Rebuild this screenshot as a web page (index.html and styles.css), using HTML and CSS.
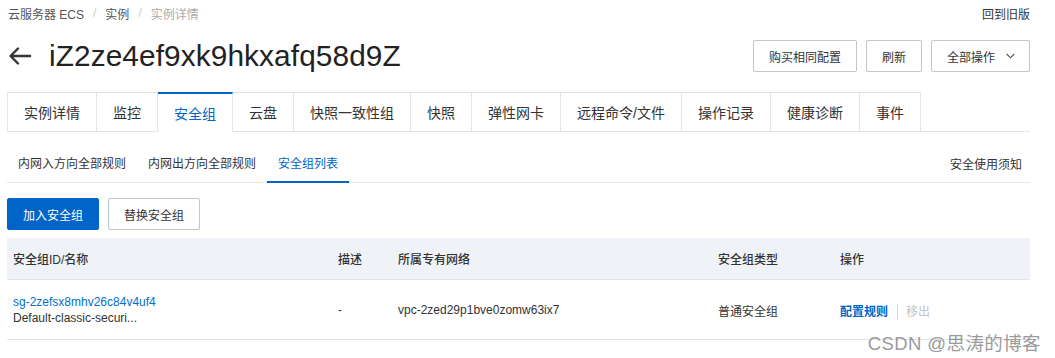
FILE: index.html
```html
<!DOCTYPE html>
<html lang="zh-CN">
<head>
<meta charset="utf-8">
<title>实例详情</title>
<link rel="stylesheet" href="styles.css">
</head>
<body>
<div class="page">
  <div class="topbar">
    <nav class="crumbs">
      <span class="crumb">云服务器 ECS</span>
      <span class="sep">/</span>
      <span class="crumb">实例</span>
      <span class="sep">/</span>
      <span class="crumb current">实例详情</span>
    </nav>
    <a class="old">回到旧版</a>
  </div>

  <div class="titlebar">
    <div class="title">
      <svg class="back" width="24" height="20" viewBox="0 0 24 20"><path d="M22 10H3M10 2.5L2.5 10L10 17.5" fill="none" stroke="#333" stroke-width="2.4" stroke-linecap="round" stroke-linejoin="round"/></svg>
      <h1>iZ2ze4ef9xk9hkxafq58d9Z</h1>
    </div>
    <div class="actions">
      <button class="btn">购买相同配置</button>
      <button class="btn">刷新</button>
      <button class="btn drop">全部操作<svg width="9" height="6" viewBox="0 0 9 6"><path d="M0.7 1l3.8 3.8 3.8-3.8" fill="none" stroke="#555" stroke-width="1.1"/></svg></button>
    </div>
  </div>

  <div class="tabs">
    <div class="tab">实例详情</div>
    <div class="tab">监控</div>
    <div class="tab active">安全组</div>
    <div class="tab">云盘</div>
    <div class="tab">快照一致性组</div>
    <div class="tab">快照</div>
    <div class="tab">弹性网卡</div>
    <div class="tab">远程命令/文件</div>
    <div class="tab">操作记录</div>
    <div class="tab">健康诊断</div>
    <div class="tab">事件</div>
  </div>

  <div class="subtabs">
    <div class="subtab">内网入方向全部规则</div>
    <div class="subtab">内网出方向全部规则</div>
    <div class="subtab active">安全组列表</div>
    <div class="notice">安全使用须知</div>
  </div>

  <div class="toolbar">
    <button class="btn primary">加入安全组</button>
    <button class="btn">替换安全组</button>
  </div>

  <div class="table">
    <div class="row head">
      <div class="cell">安全组ID/名称</div>
      <div class="cell">描述</div>
      <div class="cell">所属专有网络</div>
      <div class="cell">安全组类型</div>
      <div class="cell">操作</div>
    </div>
    <div class="row body">
      <div class="cell">
        <a class="link">sg-2zefsx8mhv26c84v4uf4</a>
        <div class="name">Default-classic-securi...</div>
      </div>
      <div class="cell">-</div>
      <div class="cell">vpc-2zed29p1bve0zomw63ix7</div>
      <div class="cell">普通安全组</div>
      <div class="cell ops"><a class="op">配置规则</a><span class="bar"></span><span class="op disabled">移出</span></div>
    </div>
  </div>
</div>
<div class="watermark">CSDN @思涛的博客</div>
</body>
</html>
```
FILE: styles.css
```css
* { box-sizing: border-box; }
html, body { margin: 0; padding: 0; background: #fff; }
body {
  font-family: "Liberation Sans", "Noto Sans CJK SC", Arial, sans-serif;
  color: #333;
  font-size: 12px;
  position: relative;
  width: 1055px;
  height: 358px;
  overflow: hidden;
}
.page { margin: 0 25px 0 7px; }

.topbar {
  display: flex;
  justify-content: space-between;
  align-items: center;
  height: 24px;
  margin-top: 1px;
}
.crumbs { display: flex; align-items: center; color: #555; padding-left: 1px; }
.crumb { font-size: 12px; }
.crumb.current { color: #aaa; }
.sep { color: #ccc; margin: 0 9px; }
.old { color: #333; font-size: 12px; }

.titlebar {
  display: flex;
  justify-content: space-between;
  align-items: center;
  margin-top: 15px;
  height: 32px;
}
.title { display: flex; align-items: center; }
.back { margin-left: 1px; margin-right: 17px; }
h1 {
  margin: 0;
  font-size: 29.8px;
  font-weight: 400;
  color: #222;
  letter-spacing: 0.1px;
}
.actions { display: flex; gap: 9px; }
.btn {
  font-family: inherit;
  font-size: 12px;
  color: #333;
  background: #fff;
  border: 1px solid #c0c6cc;
  border-radius: 2px;
  height: 32px;
  padding: 0 15px;
  display: inline-flex;
  align-items: center;
  white-space: nowrap;
  cursor: pointer;
}
.btn.drop { padding: 0 14px 0 15px; gap: 11px; }
.btn.primary {
  background: #0064c8;
  border-color: #0064c8;
  color: #fff;
  padding: 0 15px;
  justify-content: center;
}

.tabs {
  display: flex;
  margin-top: 20px;
  border-bottom: 1px solid #e3e4e6;
  height: 40px;
}
.tab {
  height: 40px;
  padding: 0 16px;
  font-size: 14px;
  display: flex;
  align-items: center;
  border: 1px solid #e3e4e6;
  border-left: none;
  background: #fff;
  color: #333;
}
.tab:first-child { border-left: 1px solid #e3e4e6; }
.tab.active {
  color: #0064c8;
  border-top: 2px solid #0064c8;
  border-bottom-color: #fff;
}

.subtabs {
  display: flex;
  align-items: stretch;
  margin-top: 12px;
  height: 39px;
  border-bottom: 1px solid #e3e4e6;
}
.subtab {
  padding: 0 11px;
  display: flex;
  align-items: center;
  font-size: 12px;
  color: #333;
  border-bottom: 2px solid transparent;
  margin-bottom: -1px;
}
.subtab.active { color: #0064c8; border-bottom-color: #0064c8; }
.notice { margin-left: auto; display: flex; align-items: center; padding-right: 8px; color: #333; }

.toolbar { display: flex; gap: 9px; margin-top: 15px; }
.toolbar .btn { width: 92px; justify-content: center; padding: 0; }

.table { margin-top: 8px; }
.row {
  display: grid;
  grid-template-columns: 325px 60px 320px 122px 1fr;
  border-bottom: 1px solid #e3e4e6;
}
.row.head { background: #eff3f8; height: 42px; font-weight: 500; color: #333; }
.row.body { height: 60px; }
.cell { padding-left: 6px; display: flex; flex-direction: column; justify-content: center; }
.row.body .cell { padding-top: 1px; }
.link { color: #0070cc; line-height: 16px; }
.name { line-height: 16px; color: #333; }
.ops { flex-direction: row; align-items: center; justify-content: flex-start; }
.op { color: #0064c8; font-weight: 600; }
.op.disabled { color: #c4c4c4; font-weight: 400; }
.bar { width: 1px; height: 16px; background: #d8d8d8; margin: 4px 8px 0 9px; }

.watermark {
  position: absolute;
  right: 14px;
  bottom: 3px;
  font-size: 18.5px;
  color: #8a8a8a;
  opacity: 0.85;
  letter-spacing: 0.4px;
}
```
